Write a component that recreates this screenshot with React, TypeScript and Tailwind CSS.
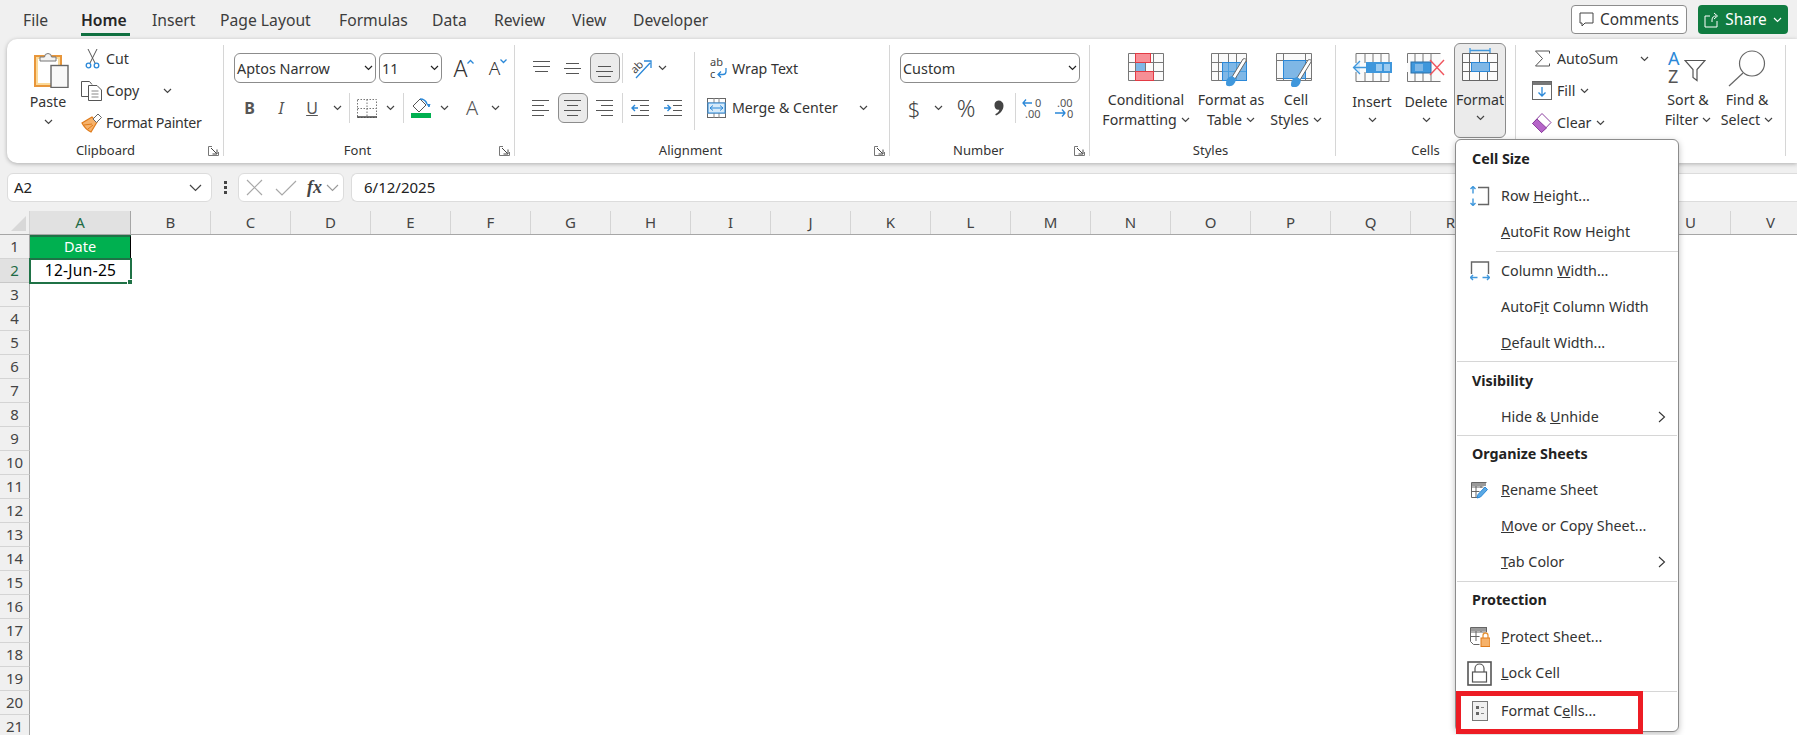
import type { ReactNode } from 'react';

const Chev = ({ dark }: { dark?: boolean }) => (
  <svg width="9" height="6" viewBox="0 0 9 6" className="shrink-0">
    <path d="M1 1l3.5 3.5L8 1" fill="none" stroke={dark ? '#222' : '#444'} strokeWidth="1.2" />
  </svg>
);

const Launcher = () => (
  <svg width="11" height="10" viewBox="0 0 11 10" className="shrink-0">
    <path d="M4 .5H.5v9h10V6" fill="none" stroke="#777" />
    <path d="M3 2l5.5 5.5M9 3.5V8H4.5" fill="none" stroke="#444" />
  </svg>
);

const Sep = () => <div className="w-px h-[30px] bg-[#d6d6d6] shrink-0" />;

const Select = ({ text, w }: { text: string; w: string }) => (
  <div className={`${w} h-[30px] flex items-center justify-between pl-[2px] pr-[2px] bg-white border border-[#8c8c8c] rounded-md text-[14.4px] text-[#333]`}>
    <span className="pt-[1px]">{text}</span>
    <Chev dark />
  </div>
);

function Group({ w, label, pad, launcher, children }: { w: string; label?: string; pad?: string; launcher?: boolean; children: ReactNode }) {
  return (
    <div className={`${w} shrink-0 h-[111px] mt-[6px] border-r border-[#d6d6d6] flex flex-col`}>
      <div className="flex-1 min-h-0">{children}</div>
      <div className="h-[16px] -mb-[3px] flex items-center text-[13px] text-[#333]">
        <div className={`flex-1 text-center ${pad ?? ''}`}>{label}</div>
        {launcher && <div className="mr-[4px]"><Launcher /></div>}
      </div>
    </div>
  );
}

/* ---------- ribbon drawings ---------- */

const PasteIcon = () => (
  <svg width="35" height="38" viewBox="0 0 35 38">
    <rect x="1" y="6" width="26" height="30" fill="#fbd998" stroke="#e8963a" strokeWidth="2" />
    <rect x="4" y="9" width="20" height="24" fill="#fff" />
    <path d="M6 11V7h4.500a3.500 3.500 0 017 0H22v4z" fill="#f2f2f2" stroke="#777" />
    <rect x="17" y="15.500" width="17" height="22" fill="#f8f8f8" stroke="#666" strokeWidth="1.400" />
  </svg>
);
const CutIcon = () => (
  <svg width="15" height="20" viewBox="0 0 15 20">
    <path d="M3 0l7 14M12 0L5 14" stroke="#555" fill="none" />
    <circle cx="3.500" cy="16.500" r="2.300" fill="none" stroke="#2b88d8" strokeWidth="1.300" />
    <circle cx="11.500" cy="16.500" r="2.300" fill="none" stroke="#2b88d8" strokeWidth="1.300" />
  </svg>
);
const CopyIcon = () => (
  <svg width="21" height="20" viewBox="0 0 21 20">
    <path d="M8 15.500H.5V.5h8l2.500 3" fill="none" stroke="#555" />
    <path d="M7.500 4.500H16l4.500 4.500v10.500h-13z" fill="#fff" stroke="#555" />
    <path d="M10.500 10h7M10.500 13h7M10.500 16h7" stroke="#888" />
  </svg>
);
const PainterIcon = () => (
  <svg width="21" height="19" viewBox="0 0 21 19">
    <path d="M11 3L1 9c2 4 5 7 9 9l6-10z" fill="#f6b26b" stroke="#e07b1a" strokeWidth="1.200" />
    <path d="M3 11l8-1M7 15l5-4" stroke="#e07b1a" />
    <path d="M12 5l5-5 3.500 3.500-5 5z" fill="#fff" stroke="#666" />
  </svg>
);
const BorderIcon = () => (
  <svg width="20" height="19" viewBox="0 0 20 19">
    <path d="M.5.500h19v18H.5zM10 .500v18M.5 9.500h19" fill="none" stroke="#777" strokeDasharray="1.500 1.500" />
    <path d="M0 18h20" stroke="#444" strokeWidth="1.500" />
  </svg>
);
const FillIcon = () => (
  <svg width="21" height="20" viewBox="0 0 21 20">
    <path d="M9 1L2 8l6 6 7-7z" fill="#fff" stroke="#555" />
    <path d="M9 1c3 0 6 2 7 5" fill="none" stroke="#2b88d8" strokeWidth="1.500" />
    <path d="M16 6l2 3 1-3" fill="#2b88d8" stroke="#2b88d8" />
    <rect x="0" y="15" width="20" height="5" fill="#00b050" />
  </svg>
);
const Lines = ({ rows }: { rows: [number, number, number][] }) => (
  <svg width="20" height="20" viewBox="0 0 20 20">
    {rows.map((r, i) => (
      <path key={i} d={`M${r[0]} ${r[2]}.5H${r[1]}`} stroke="#555" />
    ))}
  </svg>
);
const Orient = () => (
  <svg width="21" height="21" viewBox="0 0 21 21" className="overflow-visible">
    <text x="0" y="13" fontSize="11" fill="#444" transform="rotate(-45 6 10)" fontFamily="Noto Sans">ab</text>
    <path d="M5 20L19 5M13 3h7v7" fill="none" stroke="#2b88d8" strokeWidth="1.300" />
  </svg>
);
const Indent = ({ inc }: { inc?: boolean }) => (
  <svg width="18" height="18" viewBox="0 0 18 18">
    <path d="M0 1.500h18M9 6.500h9M9 11.500h9M0 16.500h18" stroke="#555" />
    {inc ? <path d="M0 9h6M3.500 6L6.500 9l-3 3" stroke="#2b88d8" fill="none" strokeWidth="1.400" /> : <path d="M7 9H1M4 6L1 9l3 3" stroke="#2b88d8" fill="none" strokeWidth="1.400" />}
  </svg>
);
const WrapIcon = () => (
  <svg width="19" height="22" viewBox="0 0 19 22" className="overflow-visible">
    <text x="0" y="9" fontSize="11" fill="#444" fontFamily="Noto Sans">ab</text>
    <text x="0" y="21" fontSize="11" fill="#444" fontFamily="Noto Sans">c</text>
    <path d="M16 11v3.500a3 3 0 01-3 3H8M11 14.500l-3 3 3 3" fill="none" stroke="#2b88d8" strokeWidth="1.300" />
  </svg>
);
const MergeIcon = () => (
  <svg width="19" height="20" viewBox="0 0 19 20">
    <rect x=".5" y=".5" width="18" height="19" fill="#fff" stroke="#666" />
    <path d="M0 5h19M0 15h19M7 0v5M12 0v5M7 15v5M12 15v5" stroke="#888" />
    <rect x="1" y="5" width="17" height="10" fill="#d7ebfa" stroke="#2b88d8" />
    <path d="M3 10h13M6 7.500L3 10l3 2.500M13 7.500l3 2.500-3 2.500" fill="none" stroke="#2b88d8" />
  </svg>
);
const DecimalIcon = ({ inc }: { inc?: boolean }) => (
  <svg width="21" height="22" viewBox="0 0 21 22" fontFamily="Noto Sans" fontSize="11" fill="#555" className="overflow-visible">
    {inc ? (
      <>
        <path d="M10 6H1M4 2.500L1 6l3 3.500" fill="none" stroke="#2b88d8" strokeWidth="1.300" />
        <text x="13" y="10">0</text>
        <text x="3" y="21">.00</text>
      </>
    ) : (
      <>
        <text x="3" y="10">.00</text>
        <path d="M1 16h10M8 12.500l3 3.500-3 3.500" fill="none" stroke="#2b88d8" strokeWidth="1.300" />
        <text x="13" y="21">0</text>
      </>
    )}
  </svg>
);
const CommaIcon = () => (
  <svg width="11" height="16" viewBox="0 0 11 16">
    <path d="M5.500 .5a5 5 0 015 5c0 4.500-3 8-7.500 10l-.8-1.200c2.300-1.300 3.800-3 4.200-4.600a4.800 4.800 0 01-.9.100 4.700 4.700 0 010-9.300z" fill="#444" />
  </svg>
);

const gridLines = 'M.5 .5h35v27h-35zM7.500 0v28M17.500 0v28M25.500 0v28M0 9.500h36M0 18.500h36';
const CondIcon = () => (
  <svg width="36" height="29" viewBox="0 0 36 29">
    <rect width="36" height="28" fill="#fbfbfb" />
    <path d={gridLines} fill="none" stroke="#777" />
    <rect x="7.500" y=".5" width="15" height="9" fill="#f78f96" stroke="#e23a44" />
    <rect x="7.500" y="18.500" width="18" height="9" fill="#f78f96" stroke="#e23a44" />
    <rect x="8" y="10" width="9" height="8" fill="#7fb7e6" />
  </svg>
);
const Brush = () => (
  <>
    <path d="M38 3L27 21l-3-2L35 1c2-1 4 0 3 2z" fill="#fff" stroke="#666" />
    <path d="M24 18c-4 1-6 3-6 8 0 3 6 3 8 0 2-2 2-5 1-6z" fill="#3f97dc" />
  </>
);
const TableIcon = () => (
  <svg width="40" height="34" viewBox="0 0 40 34">
    <path d={gridLines} fill="#fafafa" stroke="#777" />
    <rect x="11.500" y="9.500" width="24" height="18" fill="#7fb7e6" stroke="#2b88d8" />
    <path d="M17.500 10v17M25.500 10v17M12 18.500h23" stroke="#4b9fdf" />
    <g transform="translate(-3 5)"><Brush /></g>
  </svg>
);
const StylesIcon = () => (
  <svg width="40" height="34" viewBox="0 0 40 34">
    <path d="M.5 .5h35v27h-35zM7.500 0v28M29.500 0v28M0 7.500h36M0 25.500h36" fill="#fafafa" stroke="#777" />
    <rect x="7.500" y="7.500" width="22" height="18" fill="#7fb7e6" stroke="#2b88d8" />
    <g transform="translate(-3 6)"><Brush /></g>
  </svg>
);
const InsertIcon = () => (
  <svg width="41" height="29" viewBox="0 0 41 29">
    <rect x="3" width="34" height="29" fill="#fbfbfb" />
    <path d="M4 10V.5h33v10M4 19v9.500h33V19M13 0v10M21 0v10M29 0v10M13 19v10M21 19v10M29 19v10" fill="none" stroke="#777" />
    <rect x="14" y="9" width="26" height="11" fill="#3f97dc" />
    <rect x="24" y="11" width="6" height="7" fill="#9ccbf0" /><rect x="32" y="11" width="6" height="7" fill="#9ccbf0" />
    <path d="M15 14.500H2M8 8l-6.500 6.500L8 21M15 9v11" fill="#dbecfa" stroke="#3f97dc" strokeWidth="1.300" />
  </svg>
);
const DeleteIcon = () => (
  <svg width="38" height="29" viewBox="0 0 38 29">
    <rect width="34" height="29" fill="#fbfbfb" />
    <path d="M.5 10V.5h33M.5 19v9.500h33M8 0v10M16 0v10M24 0v10M8 19v10M16 19v10M24 19v10" fill="none" stroke="#777" />
    <rect x="4" y="9" width="20" height="11" fill="#3f97dc" stroke="#2a6fa8" />
    <rect x="8" y="11" width="8" height="7" fill="#7fb7e6" />
    <path d="M23 7l14 15M37 7L23 22" stroke="#f0555e" strokeWidth="1.400" />
  </svg>
);
const FormatIcon = () => (
  <svg width="36" height="33" viewBox="0 0 36 33">
    <path d="M8 2.500h20M8 0v5M28 0v5" stroke="#3f97dc" strokeWidth="1.300" />
    <g transform="translate(0 5)">
      <path d={gridLines} fill="#fbfbfb" stroke="#666" />
      <rect x="9.500" y="9.500" width="18" height="9" fill="#7fb7e6" stroke="#2b88d8" />
    </g>
  </svg>
);
const Sigma = () => (
  <svg width="17" height="17" viewBox="0 0 17 17">
    <path d="M15.500 3.500V1H1.500l7 7.500-7 7.500h14v-2.500" fill="none" stroke="#555" />
  </svg>
);
const FillDown = () => (
  <svg width="20" height="19" viewBox="0 0 20 19">
    <rect x=".5" y=".5" width="19" height="18" fill="#fff" stroke="#666" />
    <rect x="1" y="1" width="18" height="3" fill="#777" />
    <path d="M10 6v9M6.500 11.500L10 15l3.500-3.500" fill="none" stroke="#2b88d8" strokeWidth="1.300" />
  </svg>
);
const Eraser = () => (
  <svg width="20" height="20" viewBox="0 0 20 20">
    <path d="M10 .500l9 9-9.500 10-9-9z" fill="#fff" stroke="#8b3f9e" />
    <path d="M5 6l9.500 9-5 4.500-9-9z" fill="#b565c8" stroke="#8b3f9e" />
  </svg>
);
const SortIcon = () => (
  <div className="relative w-[40px] h-[35px] text-[18px] leading-[17px]">
    <span className="absolute left-0 top-0 text-[#2b88d8]">A</span>
    <span className="absolute left-0 top-[18px] text-[#555]">Z</span>
    <svg width="22" height="30" viewBox="0 0 22 30" className="absolute left-[16px] top-[3px]">
      <path d="M1 7.500h20l-8 9v11l-4-3v-8z" fill="none" stroke="#555" strokeWidth="1.200" />
    </svg>
  </div>
);
const FindIcon = () => (
  <svg width="38" height="37" viewBox="0 0 38 37">
    <circle cx="24" cy="13.500" r="12.500" fill="#fff" stroke="#666" strokeWidth="1.200" />
    <path d="M15 23L1 36" stroke="#666" strokeWidth="1.200" />
  </svg>
);

/* ---------- menu drawings ---------- */

const RowHeightIcon = () => (
  <svg width="20" height="20" viewBox="0 0 20 20">
    <path d="M8 1.500h10.500v17H8" fill="none" stroke="#666" strokeWidth="1.400" />
    <path d="M3 .5v7M3 12.500v7M.5 3L3 .5 5.500 3M.5 17L3 19.500 5.500 17" fill="none" stroke="#3f97dc" strokeWidth="1.400" />
  </svg>
);
const ColWidthIcon = () => (
  <svg width="20" height="20" viewBox="0 0 20 20">
    <path d="M1.500 13V1h17v12" fill="none" stroke="#666" strokeWidth="1.400" />
    <path d="M.5 16.500h7M12.500 16.500h7M3 14L.5 16.500 3 19M17 14l2.500 2.500L17 19" fill="none" stroke="#3f97dc" strokeWidth="1.400" />
  </svg>
);
const RenameIcon = () => (
  <svg width="17" height="17" viewBox="0 0 17 17">
    <path d="M.5.500h15M.5.500v15h7M.5 5h12M.5 9.500h8M5 0v15M10 0v6" fill="none" stroke="#666" />
    <rect x="1" y="1" width="14" height="3" fill="#9a9a9a" />
    <path d="M6 16l1-3.500L14 5l2.500 2.500L9.500 15z" fill="#5ba9e4" stroke="#2b88d8" />
  </svg>
);
const ProtectIcon = () => (
  <svg width="20" height="20" viewBox="0 0 20 20">
    <path d="M.5.500h16M.5.500v14l3 3h6M.5 5h16M.5 9.500h9M6 0v14M11 0v5M16.500 0v5" fill="none" stroke="#666" />
    <rect x="1" y="1" width="15" height="3" fill="#9a9a9a" />
    <path d="M13 11V8.500a2.500 2.500 0 015 0V11" fill="none" stroke="#e8963a" strokeWidth="1.300" />
    <rect x="11" y="11" width="9" height="8.500" fill="#f6b26b" stroke="#e07b1a" />
  </svg>
);
const LockIcon = () => (
  <svg width="25" height="25" viewBox="0 0 25 25">
    <rect x="1" y="1" width="23" height="23" fill="#fff" stroke="#555" strokeWidth="1.600" />
    <path d="M8 11V7.500a4.500 4.500 0 019 0V11" fill="none" stroke="#555" strokeWidth="1.200" />
    <rect x="5.500" y="11" width="14" height="10" fill="#fff" stroke="#555" strokeWidth="1.200" />
  </svg>
);
const CellsIcon = () => (
  <svg width="16" height="20" viewBox="0 0 16 20">
    <rect x=".5" y=".5" width="15" height="19" fill="#f0f0f0" stroke="#777" />
    <rect x="4" y="5" width="3" height="3" fill="#666" />
    <rect x="4" y="11" width="3" height="3" fill="#666" />
    <path d="M9 6.500h3M9 12.500h3" stroke="#888" />
  </svg>
);

function MenuHead({ children, h }: { children: ReactNode; h: string }) {
  return <div className={`${h} flex items-center pl-[16px] font-bold text-[#222]`}>{children}</div>;
}
function MenuItem({ icon, more, children }: { icon?: ReactNode; more?: boolean; children: ReactNode }) {
  return (
    <div className="h-[36px] flex items-center text-[#333]">
      <div className="w-[45px] flex justify-center pl-[2px]">{icon}</div>
      <div className="flex-1">{children}</div>
      {more && (
        <svg width="8" height="12" viewBox="0 0 8 12" className="mr-[12px]">
          <path d="M1 1l5.500 5L1 11" fill="none" stroke="#333" strokeWidth="1.100" />
        </svg>
      )}
    </div>
  );
}

// S and T sit fully behind the open menu
const columns = 'BCDEFGHIJKLMNOPQR  UV'.split('');
const rows = Array.from({ length: 21 }, (_, i) => i + 1);

export default function App() {
  return (
    <div className="relative w-full h-screen overflow-hidden bg-[#f0f0f0] text-[14.3px] text-[#333] font-['Noto_Sans',sans-serif]">
      {/* Tabs */}
      <div className="h-[39px] flex items-start text-[15.7px] text-[#3d3d3d]">
        <div className="pt-[9px] pl-[23px] w-[81px]">File</div>
        <div className="pt-[9px] w-[71px] relative font-semibold text-[#262626]">
          Home
          <div className="absolute left-0 top-[33px] w-[49px] h-[3px] bg-[#107040]" />
        </div>
        <div className="pt-[9px] w-[68px]">Insert</div>
        <div className="pt-[9px] w-[119px]">Page Layout</div>
        <div className="pt-[9px] w-[93px]">Formulas</div>
        <div className="pt-[9px] w-[62px]">Data</div>
        <div className="pt-[9px] w-[78px]">Review</div>
        <div className="pt-[9px] w-[61px]">View</div>
        <div className="pt-[9px]">Developer</div>
        <div className="ml-auto mt-[5px] mr-[9px] flex gap-[11px] text-[15.4px]">
          <div className="w-[116px] h-[29px] flex items-center justify-center gap-[6px] bg-white border border-[#8c8c8c] rounded-[4px] text-[#333]">
            <svg width="15" height="15" viewBox="0 0 15 15">
              <path d="M1 1h13v10H6l-3 3v-3H1z" fill="none" stroke="#444" />
            </svg>
            Comments
          </div>
          <div className="w-[90px] h-[29px] flex items-center justify-center gap-[6px] bg-[#107c41] rounded-[4px] text-white">
            <svg width="15" height="16" viewBox="0 0 15 16">
              <path d="M6 4H1v11h12V9M8 10V8c0-3 2-4 4-4M10 1l3.500 3L10 7" fill="none" stroke="#fff" />
            </svg>
            Share
            <svg width="9" height="6" viewBox="0 0 9 6"><path d="M1 1l3.500 3.500L8 1" fill="none" stroke="#fff" strokeWidth="1.200" /></svg>
          </div>
        </div>
      </div>

      {/* Ribbon */}
      <div className="ml-[7px] h-[124px] flex bg-white rounded-l-[10px] shadow-[0_1px_4px_rgba(0,0,0,0.28)] text-[14.2px] text-[#333]">
        <Group w="w-[217px]" label="Clipboard" pad="pr-[4px]" launcher>
          <div className="flex">
            <div className="ml-[18px] w-[46px] flex flex-col items-center">
              <div className="mt-[5px] ml-[6px] h-[38px]"><PasteIcon /></div>
              <div className="mt-[4px] leading-[20px]">Paste</div>
              <div className="mt-[7px]"><Chev /></div>
            </div>
            <div className="ml-[10px] flex flex-col gap-[4px]">
              <div className="h-[28px] flex items-center"><div className="w-[25px] pl-[4px]"><CutIcon /></div>Cut</div>
              <div className="h-[28px] flex items-center"><div className="w-[25px]"><CopyIcon /></div>Copy<div className="ml-[24px]"><Chev /></div></div>
              <div className="h-[28px] flex items-center"><div className="w-[25px]"><PainterIcon /></div><span className="tracking-[-0.3px]">Format Painter</span></div>
            </div>
          </div>
        </Group>

        <Group w="w-[291px]" label="Font" pad="pr-[8px]" launcher>
          <div className="pt-[8px] pl-[10px]">
            <div className="flex items-center gap-[3px]">
              <Select text="Aptos Narrow" w="w-[142px]" />
              <Select text="11" w="w-[63px]" />
              <div className="w-[28px] ml-[5px] flex items-start justify-center text-[23px] leading-[30px] font-light">
                A<svg width="7" height="5" viewBox="0 0 7 5" className="mt-[6px]"><path d="M.5 4.500l3-3 3 3" fill="none" stroke="#2b88d8" strokeWidth="1.300" /></svg>
              </div>
              <div className="w-[28px] ml-[3px] flex items-start justify-center text-[19px] leading-[30px] font-light">
                A<svg width="7" height="5" viewBox="0 0 7 5" className="mt-[6px]"><path d="M.5 .5l3 3 3-3" fill="none" stroke="#2b88d8" strokeWidth="1.300" /></svg>
              </div>
            </div>
            <div className="mt-[10px] flex items-center h-[30px] text-[#555]">
              <div className="w-[31px] text-center font-bold text-[16px]">B</div>
              <div className="w-[32px] text-center italic text-[16px]">I</div>
              <div className="w-[30px] text-center underline text-[16px]">U</div>
              <div className="w-[20px] flex justify-center"><Chev /></div>
              <div className="ml-[2px]"><Sep /></div>
              <div className="w-[33px] flex justify-center"><BorderIcon /></div>
              <div className="w-[14px] flex justify-center"><Chev /></div>
              <div className="ml-[6px]"><Sep /></div>
              <div className="w-[34px] flex justify-center"><FillIcon /></div>
              <div className="w-[12px] flex justify-center"><Chev /></div>
              <div className="w-[40px] pl-[4px] text-center text-[20px] font-light">A</div>
              <div className="w-[10px] flex justify-center"><Chev /></div>
            </div>
          </div>
        </Group>

        <Group w="w-[375px]" label="Alignment" pad="pr-[8px]" launcher>
          <div className="flex">
            <div className="w-[179px] pt-[8px]">
              <div className="flex items-center h-[30px]">
                <div className="ml-[9px] w-[35px] flex justify-center"><Lines rows={[[1, 18, 3], [1, 18, 8], [3, 16, 13]]} /></div>
                <div className="w-[28px] flex justify-center"><Lines rows={[[3, 16, 5], [1, 18, 10], [3, 16, 15]]} /></div>
                <div className="ml-[3px] w-[30px] h-[30px] flex items-center justify-center bg-[#ebebeb] border border-[#8c8c8c] rounded-md"><Lines rows={[[3, 16, 8], [1, 18, 13], [3, 16, 18]]} /></div>
                <div className="ml-[2px]"><Sep /></div>
                <div className="w-[36px] flex justify-center"><Orient /></div>
                <div className="w-[6px] flex justify-center"><Chev /></div>
              </div>
              <div className="mt-[10px] flex items-center h-[30px]">
                <div className="ml-[9px] w-[34px] flex justify-center"><Lines rows={[[1, 18, 2], [1, 13, 7], [1, 18, 12], [1, 13, 17]]} /></div>
                <div className="w-[30px] h-[30px] flex items-center justify-center bg-[#ebebeb] border border-[#8c8c8c] rounded-md"><Lines rows={[[1, 18, 2], [4, 15, 7], [1, 18, 12], [4, 15, 17]]} /></div>
                <div className="w-[34px] flex justify-center"><Lines rows={[[1, 18, 2], [6, 18, 7], [1, 18, 12], [6, 18, 17]]} /></div>
                <Sep />
                <div className="w-[34px] flex justify-center"><Indent /></div>
                <div className="w-[32px] flex justify-center"><Indent inc /></div>
              </div>
            </div>
            <div className="mt-[7px] h-[78px] border-l border-[#d6d6d6] w-[175px] pt-[1px]">
              <div className="h-[30px] flex items-center">
                <div className="w-[37px] pl-[15px]"><WrapIcon /></div><span className="pt-[2px]">Wrap Text</span>
              </div>
              <div className="mt-[10px] h-[30px] flex items-center justify-between">
                <div className="flex items-center"><div className="w-[37px] pl-[12px]"><MergeIcon /></div>Merge &amp; Center</div>
                <div className="mr-[1px]"><Chev /></div>
              </div>
            </div>
          </div>
        </Group>

        <Group w="w-[200px]" label="Number" pad="pr-[7px]" launcher>
          <div className="pt-[8px] pl-[10px]">
            <Select text="Custom" w="w-[180px]" />
            <div className="mt-[10px] flex items-center h-[30px] text-[#444]">
              <div className="w-[28px] text-center text-[22px] font-light">$</div>
              <div className="w-[20px] flex justify-center"><Chev /></div>
              <div className="w-[36px] text-center text-[23px] font-light">%</div>
              <div className="w-[28px] flex justify-center"><CommaIcon /></div>
              <div className="ml-[3px]"><Sep /></div>
              <div className="w-[32px] flex justify-center"><DecimalIcon inc /></div>
              <div className="w-[33px] flex justify-center"><DecimalIcon /></div>
            </div>
          </div>
        </Group>

        <Group w="w-[246px]" label="Styles" pad="pr-[4px]">
          <div className="flex ml-[10px] pt-[8px] text-center leading-[20px]">
            <div className="w-[92px]">
              <div className="h-[37px] flex justify-center"><CondIcon /></div>
              <div>Conditional</div>
              <div className="flex items-center justify-center gap-[4px]">Formatting<Chev /></div>
            </div>
            <div className="w-[78px]">
              <div className="h-[37px] flex justify-center"><TableIcon /></div>
              <div>Format as</div>
              <div className="flex items-center justify-center gap-[4px]">Table<Chev /></div>
            </div>
            <div className="w-[52px]">
              <div className="h-[37px] flex justify-center"><StylesIcon /></div>
              <div>Cell</div>
              <div className="flex items-center justify-center gap-[4px]">Styles<Chev /></div>
            </div>
          </div>
        </Group>

        <Group w="w-[180px]" label="Cells">
          <div className="flex ml-[10px] text-center leading-[20px]">
            <div className="w-[52px] pt-[8px]">
              <div className="h-[39px] flex justify-center"><InsertIcon /></div>
              <div>Insert</div>
              <div className="mt-[5px] flex justify-center"><Chev /></div>
            </div>
            <div className="w-[56px] pt-[8px]">
              <div className="h-[39px] flex justify-center"><DeleteIcon /></div>
              <div>Delete</div>
              <div className="mt-[5px] flex justify-center"><Chev /></div>
            </div>
            <div className="w-[52px] h-[95px] -mt-[2px] pt-[4px] bg-[#ebebeb] border border-[#8c8c8c] rounded-md">
              <div className="h-[42px] flex justify-center"><FormatIcon /></div>
              <div>Format</div>
              <div className="mt-[5px] flex justify-center"><Chev /></div>
            </div>
          </div>
        </Group>

        <Group w="w-[270px]">
          <div className="flex ml-[14px]">
            <div className="w-[120px] flex flex-col gap-[4px]">
              <div className="h-[28px] flex items-center justify-between">
                <div className="flex items-center"><div className="w-[27px] pl-[4px]"><Sigma /></div>AutoSum</div>
                <div className="mr-[1px]"><Chev /></div>
              </div>
              <div className="h-[28px] flex items-center gap-[5px]">
                <div className="flex items-center"><div className="w-[27px] pl-[2px]"><FillDown /></div>Fill</div>
                <Chev />
              </div>
              <div className="h-[28px] flex items-center gap-[5px]">
                <div className="flex items-center"><div className="w-[27px] pl-[2px]"><Eraser /></div>Clear</div>
                <Chev />
              </div>
            </div>
            <div className="ml-[10px] flex pt-[5px] text-center leading-[20px]">
              <div className="w-[56px]">
                <div className="h-[40px] flex justify-center"><SortIcon /></div>
                <div>Sort &amp;</div>
                <div className="flex items-center justify-center gap-[4px]">Filter<Chev /></div>
              </div>
              <div className="w-[62px]">
                <div className="h-[40px] flex justify-center"><FindIcon /></div>
                <div>Find &amp;</div>
                <div className="flex items-center justify-center gap-[4px]">Select<Chev /></div>
              </div>
            </div>
          </div>
        </Group>
      </div>

      {/* Formula bar */}
      <div className="mt-[10px] h-[29px] flex items-stretch text-[15px] text-[#222]">
        <div className="ml-[7px] w-[205px] flex items-center justify-between pl-[6px] pr-[9px] bg-white border border-[#dcdcdc] rounded-md">
          A2
          <svg width="13" height="8" viewBox="0 0 13 8"><path d="M1 1l5.500 5.500L12 1" fill="none" stroke="#444" strokeWidth="1.200" /></svg>
        </div>
        <div className="w-[26px] flex flex-col items-center justify-center gap-[2px]">
          <div className="w-[3px] h-[3px] bg-[#444]" /><div className="w-[3px] h-[3px] bg-[#444]" /><div className="w-[3px] h-[3px] bg-[#444]" />
        </div>
        <div className="w-[106px] flex items-center bg-white border border-[#dcdcdc] rounded-md">
          <svg width="17" height="17" viewBox="0 0 17 17" className="ml-[7px]"><path d="M1 1l15 15M16 1L1 16" stroke="#a8a8a8" strokeWidth="1.200" /></svg>
          <svg width="22" height="16" viewBox="0 0 22 16" className="ml-[12px]"><path d="M1 9l6 6L21 1" fill="none" stroke="#a8a8a8" strokeWidth="1.200" /></svg>
          <span className="ml-[10px] w-[18px] font-['Liberation_Serif',serif] italic font-bold text-[18px] text-[#444]">fx</span>
          <svg width="13" height="8" viewBox="0 0 13 8" className="ml-[1px]"><path d="M1 1l5.500 5.500L12 1" fill="none" stroke="#999" strokeWidth="1.100" /></svg>
        </div>
        <div className="ml-[7px] flex-1 flex items-center pl-[12px] bg-white border border-[#dcdcdc] border-r-0 rounded-l-md">6/12/2025</div>
      </div>

      {/* Sheet */}
      <div className="mt-[9px] bg-white relative">
        <div className="h-[23px] flex bg-[#f0f0f0] border-b border-[#a6a6a6] text-[15px] text-[#444] box-content">
          <div className="w-[30px] shrink-0 flex items-end justify-end pr-[3px] pb-[3px] border-r border-[#d4d4d4]">
            <svg width="15" height="15" viewBox="0 0 15 15"><path d="M15 0v15H0z" fill="#d8d8d8" /></svg>
          </div>
          <div className="w-[101px] shrink-0 flex items-center justify-center bg-[#e1e1e1] border-r border-[#a6a6a6] text-[#1f6b45]">A</div>
          {columns.map((c, i) => (
            <div key={i} className="w-[80px] shrink-0 flex items-center justify-center border-r border-[#d4d4d4]">{c}</div>
          ))}
        </div>
        {rows.map(r => (
          <div key={r} className="h-[24px] flex">
            <div className={`w-[30px] shrink-0 flex items-center justify-center border-r border-b text-[15px] ${r === 2 ? 'bg-[#e1e1e1] text-[#1f6b45] border-r-[#a6a6a6] border-b-[#c8c8c8]' : 'bg-[#f0f0f0] text-[#444] border-r-[#a6a6a6] border-b-[#d4d4d4]'}`}>{r}</div>
            {r === 1 && (
              <div className="w-[101px] h-[24px] flex items-center justify-center pb-[2px] bg-[#00b050] border-r border-t-2 border-r-black border-t-[#1f7246] text-white text-[14.5px]">Date</div>
            )}
            {r === 2 && (
              <div className="w-[101px] flex items-center justify-center text-black text-[15.5px] tracking-[0.3px]">12-Jun-25</div>
            )}
          </div>
        ))}
        {/* selected cell */}
        <div className="absolute left-[29px] top-[47px] w-[103px] h-[26px] border-2 border-[#1f7246] pointer-events-none">
          <div className="absolute -right-[3px] -bottom-[3px] w-[6px] h-[6px] bg-[#1f7246] border border-white" />
        </div>
      </div>

      {/* Format dropdown */}
      <div className="absolute left-[1455px] top-[139px] w-[224px] h-[593px] bg-white border border-[#8c8c8c] rounded-md shadow-[0_2px_6px_rgba(0,0,0,0.25)]">
        <MenuHead h="h-[38px]">Cell Size</MenuHead>
        <MenuItem icon={<RowHeightIcon />}>Row <u>H</u>eight...</MenuItem>
        <MenuItem>
          <u>A</u>utoFit Row Height
        </MenuItem>
        <div className="h-[2px] pl-[40px]"><div className="h-px mt-[1px] bg-[#d6d6d6]" /></div>
        <MenuItem icon={<ColWidthIcon />}>Column <u>W</u>idth...</MenuItem>
        <MenuItem>AutoF<u>i</u>t Column Width</MenuItem>
        <MenuItem><u>D</u>efault Width...</MenuItem>
        <div className="h-[2px] px-px"><div className="h-px bg-[#d6d6d6]" /></div>
        <MenuHead h="h-[36px]">Visibility</MenuHead>
        <MenuItem more>Hide &amp; <u>U</u>nhide</MenuItem>
        <div className="h-[1px] px-px"><div className="h-px bg-[#d6d6d6]" /></div>
        <MenuHead h="h-[36px]">Organize Sheets</MenuHead>
        <MenuItem icon={<RenameIcon />}><u>R</u>ename Sheet</MenuItem>
        <MenuItem><u>M</u>ove or Copy Sheet...</MenuItem>
        <MenuItem more><u>T</u>ab Color</MenuItem>
        <div className="h-[2px] px-px"><div className="h-px mt-[1px] bg-[#d6d6d6]" /></div>
        <MenuHead h="h-[36px] pb-[2px]">Protection</MenuHead>
        <MenuItem icon={<ProtectIcon />}><u>P</u>rotect Sheet...</MenuItem>
        <MenuItem icon={<LockIcon />}><u>L</u>ock Cell</MenuItem>
        <div className="h-[2px] px-px"><div className="h-px bg-[#d6d6d6]" /></div>
        <MenuItem icon={<CellsIcon />}>Format C<u>e</u>lls...</MenuItem>
        {/* red highlight */}
        <div className="absolute left-[0px] top-[551px] w-[187px] h-[43px] border-[5px] border-[#ed1c24] pointer-events-none" />
      </div>
    </div>
  );
}
